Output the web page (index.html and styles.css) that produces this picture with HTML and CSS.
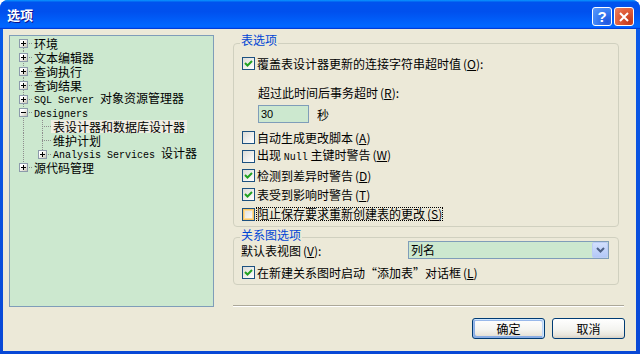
FILE: index.html
```html
<!DOCTYPE html>
<html lang="zh-CN">
<head>
    <meta charset="UTF-8">
    <title>选项</title>
    <link rel="stylesheet" href="styles.css">
</head>
<body>
    <div class="window">
        <!-- 标题栏 -->
        <div class="titlebar">
            <span class="title">选项</span>
            <div class="caption-buttons">
                <span class="cap help">?</span>
                <span class="cap close">
                    <svg width="10" height="10" viewBox="0 0 10 10">
                        <path d="M1 1 L9 9 M9 1 L1 9" stroke="#fff" stroke-width="2" fill="none"/>
                    </svg>
                </span>
            </div>
        </div>

        <div class="client">
            <div class="main">
                <!-- 左侧树 -->
                <div class="tree">
                    <div class="row"><span class="node first"><i class="exp plus"></i></span><span class="label">环境</span></div>
                    <div class="row"><span class="node mid"><i class="exp plus"></i></span><span class="label">文本编辑器</span></div>
                    <div class="row"><span class="node mid"><i class="exp plus"></i></span><span class="label">查询执行</span></div>
                    <div class="row"><span class="node mid"><i class="exp plus"></i></span><span class="label">查询结果</span></div>
                    <div class="row"><span class="node mid"><i class="exp plus"></i></span><span class="label"><span class="latin">SQL Server </span>对象资源管理器</span></div>
                    <div class="row"><span class="node mid"><i class="exp minus"></i></span><span class="label"><span class="latin">Designers</span></span></div>
                    <div class="row"><span class="node pass"></span><span class="node child mid"></span><span class="label selected">表设计器和数据库设计器</span></div>
                    <div class="row"><span class="node pass"></span><span class="node child mid"></span><span class="label">维护计划</span></div>
                    <div class="row"><span class="node pass"></span><span class="node child last"><i class="exp plus"></i></span><span class="label"><span class="latin">Analysis Services </span>设计器</span></div>
                    <div class="row"><span class="node last"><i class="exp plus"></i></span><span class="label">源代码管理</span></div>
                </div>

                <!-- 右侧选项 -->
                <div class="pane">
                    <div class="group group-table">
                        <div class="group-title">表选项</div>
                        <div class="opt opt-first">
                            <span class="check on"><svg width="11" height="11" viewBox="0 0 11 11"><path d="M2 5 L4.5 7.5 L9 3" stroke="#21A121" stroke-width="2" fill="none"/></svg></span>
                            <span>覆盖表设计器更新的连接字符串超时值<span class="key">(<u>O</u>)</span>:</span>
                        </div>
                        <div class="timeout-label">超过此时间后事务超时<span class="key">(<u>R</u>)</span>:</div>
                        <div class="timeout-row">
                            <span class="field">30</span>
                            <span>秒</span>
                        </div>
                        <div class="opt-list">
                            <div class="opt">
                                <span class="check"></span>
                                <span>自动生成更改脚本<span class="key">(<u>A</u>)</span></span>
                            </div>
                            <div class="opt">
                                <span class="check"></span>
                                <span>出现 <span class="latin">Null</span> 主键时警告<span class="key">(<u>W</u>)</span></span>
                            </div>
                            <div class="opt">
                                <span class="check on"><svg width="11" height="11" viewBox="0 0 11 11"><path d="M2 5 L4.5 7.5 L9 3" stroke="#21A121" stroke-width="2" fill="none"/></svg></span>
                                <span>检测到差异时警告<span class="key">(<u>D</u>)</span></span>
                            </div>
                            <div class="opt">
                                <span class="check on"><svg width="11" height="11" viewBox="0 0 11 11"><path d="M2 5 L4.5 7.5 L9 3" stroke="#21A121" stroke-width="2" fill="none"/></svg></span>
                                <span>表受到影响时警告<span class="key">(<u>T</u>)</span></span>
                            </div>
                            <div class="opt">
                                <span class="check hot"></span>
                                <span class="focus">阻止保存要求重新创建表的更改<span class="key">(<u>S</u>)</span></span>
                            </div>
                        </div>
                    </div>

                    <div class="group group-diagram">
                        <div class="group-title">关系图选项</div>
                        <div class="combo-row">
                            <span>默认表视图<span class="key">(<u>V</u>)</span>:</span>
                            <div class="combo">
                                <span class="combo-text">列名</span>
                                <span class="combo-btn">
                                    <svg width="9" height="6" viewBox="0 0 9 6"><path d="M1 1 L4.5 4.5 L8 1" stroke="#4D6185" stroke-width="2" fill="none"/></svg>
                                </span>
                            </div>
                        </div>
                        <div class="opt opt-diagram">
                            <span class="check on"><svg width="11" height="11" viewBox="0 0 11 11"><path d="M2 5 L4.5 7.5 L9 3" stroke="#21A121" stroke-width="2" fill="none"/></svg></span>
                            <span>在新建关系图时启动“添加表”对话框<span class="key">(<u>L</u>)</span></span>
                        </div>
                    </div>

                    <div class="separator"></div>
                </div>
            </div>

            <div class="actions">
                <button class="btn default">确定</button>
                <button class="btn">取消</button>
            </div>
        </div>
    </div>
</body>
</html>
```

FILE: styles.css
```css
/* 基础 */
* {
    box-sizing: border-box;
}

body {
    margin: 0;
    background: #fff;
    font-family: "Noto Sans CJK SC", "Liberation Sans", sans-serif;
    font-size: 12px;
    color: #000;
}

.latin {
    font-family: "Liberation Mono", "DejaVu Sans Mono", monospace;
    font-size: 10px;
}

/* 窗口外框 */
.window {
    width: 640px;
    height: 354px;
    display: flex;
    flex-direction: column;
    border-radius: 8px 8px 0 0;
    overflow: hidden;
    background: linear-gradient(to bottom, #0A5BEA, #0848D6);
}

.titlebar {
    flex: none;
    height: 29px;
    display: flex;
    align-items: flex-start;
    padding: 0 6px 0 7px;
    background: linear-gradient(180deg, #0997ff, #0053ee 8%, #0050ee 40%, #0066ff 88%, #0066ff 93%, #005bff 95%, #003dd7 96%, #003dd7);
}

.title {
    margin-top: 7px;
    color: #fff;
    font-weight: bold;
    font-size: 13px;
    line-height: 16px;
    text-shadow: 1px 1px #0F1089;
}

.caption-buttons {
    margin-left: auto;
    margin-top: 7px;
    display: flex;
    gap: 2px;
}

.cap {
    width: 20px;
    height: 19px;
    border: 1px solid #fff;
    border-radius: 3px;
    display: flex;
    align-items: center;
    justify-content: center;
    color: #fff;
    font-family: "Liberation Sans", sans-serif;
    font-weight: bold;
    font-size: 15px;
    line-height: 1;
}

.cap.help {
    background: radial-gradient(circle at 80% 80%, #1F56E0, #3F83F5 60%, #5D9BFA);
}

.cap.close {
    background: radial-gradient(circle at 80% 80%, #C3391B, #E2603C 60%, #EA8466);
}

/* 客户区 */
.client {
    flex: 1;
    margin: 0 4px 3px 3px;
    padding: 6px 6px 0 6px;
    background: #ECE9D8;
    display: flex;
    flex-direction: column;
}

.main {
    height: 272px;
    display: flex;
    gap: 19px;
}

/* 树 */
.tree {
    width: 205px;
    border: 1px solid #7F9DB9;
    background: #CCE8CF;
    padding-top: 1.1px;
}

.row {
    height: 13.78px;
    display: flex;
    align-items: center;
    padding-left: 5px;
}

.node {
    width: 17px;
    height: 100%;
    display: flex;
    align-items: center;
    background-repeat: no-repeat;
    --dot-v: repeating-linear-gradient(to bottom, #8E8E8E 0 1px, transparent 1px 2px);
    --dot-h: repeating-linear-gradient(to right, #8E8E8E 0 1px, transparent 1px 2px);
}

.node.first {
    background-image: var(--dot-h), var(--dot-v);
    background-position: 8px 50%, 8px 100%;
    background-size: 9px 1px, 1px 50%;
}

.node.mid {
    background-image: var(--dot-h), var(--dot-v);
    background-position: 8px 50%, 8px 0;
    background-size: 9px 1px, 1px 100%;
}

.node.last {
    background-image: var(--dot-h), var(--dot-v);
    background-position: 8px 50%, 8px 0;
    background-size: 9px 1px, 1px 50%;
}

.node.pass {
    background-image: var(--dot-v);
    background-position: 8px 0;
    background-size: 1px 100%;
}

.node.child {
    width: 19px;
}

.node.child.mid,
.node.child.last {
    background-position: 10px 50%, 10px 0;
}

.exp {
    width: 9px;
    height: 9px;
    margin-left: 4px;
    border: 1px solid #8C9AAB;
    background-repeat: no-repeat;
}

.node.child .exp {
    margin-left: 6px;
}

.exp.plus {
    background-image: linear-gradient(#000, #000), linear-gradient(#000, #000), linear-gradient(135deg, #fff 30%, #C9C5B5);
    background-position: center, center, 0 0;
    background-size: 5px 1px, 1px 5px, 100% 100%;
}

.exp.minus {
    background-image: linear-gradient(#000, #000), linear-gradient(135deg, #fff 30%, #C9C5B5);
    background-position: center, 0 0;
    background-size: 5px 1px, 100% 100%;
}

.label {
    padding: 0 2px;
    line-height: 13px;
    white-space: nowrap;
}

.label.selected {
    background: #EFEDE3;
}

/* 右侧 */
.pane {
    width: 391px;
    display: flex;
    flex-direction: column;
}

.group {
    margin-right: 5px;
    padding: 0 6px;
    border: 1px solid #D0D0BF;
    border-radius: 4px;
}

.group-title {
    width: max-content;
    padding: 0 1px;
    background: #ECE9D8;
    color: #0046D5;
    line-height: 12px;
}

.group-table {
    margin-top: 8px;
    padding-bottom: 2.4px;
}

.group-table .group-title {
    margin-top: -10px;
}

.group-diagram {
    margin-top: 10px;
    padding-bottom: 2.35px;
}

.group-diagram .group-title {
    margin-top: -9px;
}

.opt {
    height: 19.25px;
    display: flex;
    align-items: center;
    gap: 2px;
    padding-left: 2px;
    line-height: 13px;
    white-space: nowrap;
}

.opt-first {
    margin-top: 8px;
}

.opt-list {
    margin-top: 4.4px;
}

.opt-diagram {
    margin-top: 3.4px;
}

.check {
    flex: none;
    width: 13px;
    height: 13px;
    border: 1px solid #1C5180;
    background: linear-gradient(135deg, #DCDCD7, #fff);
    display: flex;
    align-items: center;
    justify-content: center;
}

.check.hot {
    box-shadow: inset 0 0 0 1px #FAC867, inset 0 0 0 2px #FDDC9A;
}

.key {
    margin-left: 2px;
}

.focus {
    outline: 1px dotted #000;
    line-height: 12px;
}

.timeout-label {
    margin: 12.75px 0 0 18px;
    line-height: 14px;
}

.timeout-row {
    margin: 5px 0 0 18px;
    display: flex;
    align-items: center;
    gap: 8px;
}

.field {
    width: 51px;
    height: 18px;
    border: 1px solid #7F9DB9;
    background: #CCE8CF;
    padding-left: 2px;
    line-height: 16px;
    font-family: "Liberation Sans", sans-serif;
    font-size: 11px;
}

.combo-row {
    height: 18px;
    display: flex;
    align-items: center;
    justify-content: space-between;
    padding: 0 3px 0 1px;
}

.combo {
    width: 201px;
    height: 18px;
    border: 1px solid #7F9DB9;
    background: #CCE8CF;
    display: flex;
    align-items: center;
}

.combo-text {
    flex: 1;
    padding-left: 2px;
    line-height: 16px;
}

.combo-btn {
    width: 16px;
    height: 16px;
    border: 1px solid #BCCDF5;
    border-radius: 2px;
    background: linear-gradient(#D2E0FD, #B3C8F7);
    display: flex;
    align-items: center;
    justify-content: center;
}

.separator {
    margin-top: 20px;
    height: 2px;
    border-top: 1px solid #ACA899;
    border-bottom: 1px solid #fff;
}

/* 按钮 */
.actions {
    margin-top: 11px;
    padding-right: 5px;
    display: flex;
    justify-content: flex-end;
    gap: 7px;
}

.btn {
    width: 73px;
    height: 21px;
    padding: 0;
    border: 1px solid #003C74;
    border-radius: 3px;
    background: linear-gradient(#FFFFFF, #F4F4F0 55%, #E8E5DB 85%, #D6D0C5);
    font-family: "Noto Sans CJK SC", sans-serif;
    font-size: 12px;
    color: #000;
}

.btn.default {
    box-shadow: inset -1px 1px #CEE7FF, inset 1px 2px #98B8EA, inset -2px 2px #BCD4F6, inset 1px -1px #89ADE4, inset 2px -2px #89ADE4;
}
```
